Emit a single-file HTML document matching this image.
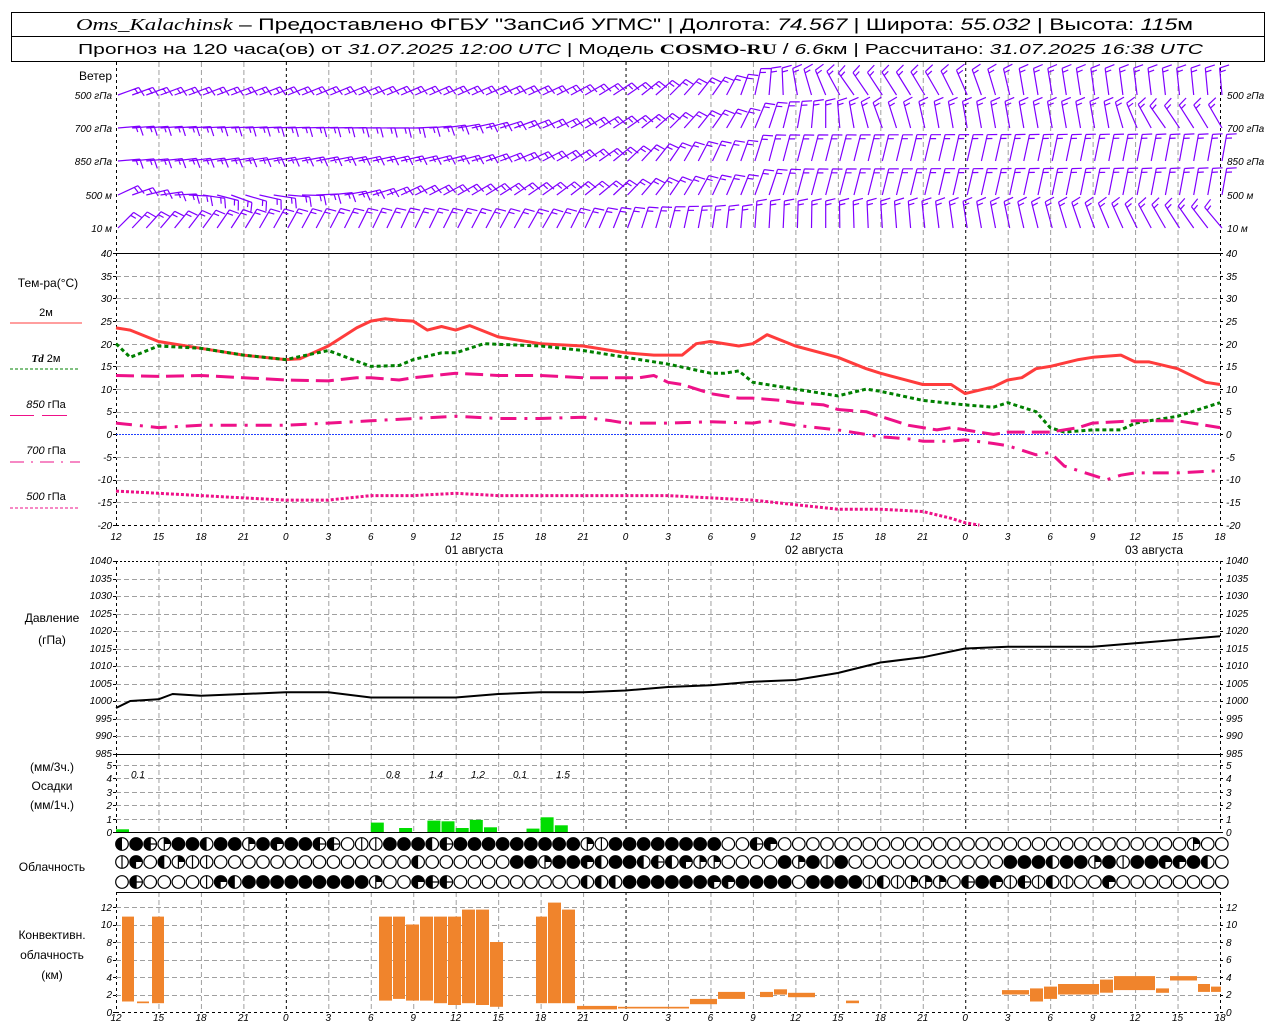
<!DOCTYPE html>
<html><head><meta charset="utf-8"><style>
html,body{margin:0;padding:0;background:#fff;}
svg{display:block;font-family:"Liberation Sans",sans-serif;}
.t{font-size:10px;font-style:italic;}
.l{font-size:12px;}
</style></head><body>
<svg id="s" width="1280" height="1024" viewBox="0 0 1280 1024" xmlns="http://www.w3.org/2000/svg">
<rect x="0" y="0" width="1280" height="1024" fill="#fff"/>
<g id="grid"></g>
<g id="data"></g>
<rect x="11.5" y="12.5" width="1253" height="49" fill="none" stroke="#000" stroke-width="1"/>
<line x1="11" y1="36.5" x2="1265" y2="36.5" stroke="#000"/>
<text x="76" y="30" font-size="17" textLength="1117" lengthAdjust="spacingAndGlyphs"><tspan font-family="Liberation Serif" font-style="italic">Oms_Kalachinsk</tspan> – Предоставлено ФГБУ "ЗапСиб УГМС" | Долгота: <tspan font-style="italic">74.567</tspan> | Широта: <tspan font-style="italic">55.032</tspan> | Высота: <tspan font-style="italic">115</tspan>м</text>
<text x="78" y="54" font-size="15" textLength="1125" lengthAdjust="spacingAndGlyphs">Прогноз на 120 часа(ов) от <tspan font-style="italic">31.07.2025 12:00 UTC</tspan>  | Модель <tspan font-family="Liberation Serif" font-weight="bold">COSMO-RU</tspan> / <tspan font-style="italic">6.6</tspan>км | Рассчитано: <tspan font-style="italic">31.07.2025 16:38 UTC</tspan></text>
<g class="l" text-anchor="end">
<text x="112" y="80">Ветер</text>
</g>
<g class="t" font-size="11" text-anchor="end">
<text x="112" y="99">500 гПа</text><text x="112" y="132">700 гПа</text><text x="112" y="165">850 гПа</text><text x="112" y="199">500  м</text><text x="112" y="232">10   м</text>
</g>
<g class="t" font-size="11">
<text x="1227" y="99">500 гПа</text><text x="1227" y="132">700 гПа</text><text x="1227" y="165">850 гПа</text><text x="1227" y="199">500  м</text><text x="1227" y="232">10   м</text>
</g>
<g class="t" text-anchor="end">
<text x="112" y="257">40</text><text x="112" y="280">35</text><text x="112" y="302">30</text><text x="112" y="325">25</text><text x="112" y="348">20</text><text x="112" y="370">15</text><text x="112" y="393">10</text><text x="112" y="415">5</text><text x="112" y="438">0</text><text x="112" y="461">-5</text><text x="112" y="483">-10</text><text x="112" y="506">-15</text><text x="112" y="529">-20</text>
</g>
<g class="t">
<text x="1226" y="257">40</text><text x="1226" y="280">35</text><text x="1226" y="302">30</text><text x="1226" y="325">25</text><text x="1226" y="348">20</text><text x="1226" y="370">15</text><text x="1226" y="393">10</text><text x="1226" y="415">5</text><text x="1226" y="438">0</text><text x="1226" y="461">-5</text><text x="1226" y="483">-10</text><text x="1226" y="506">-15</text><text x="1226" y="529">-20</text>
</g>
<g class="l" text-anchor="middle">
<text x="48" y="287">Тем-ра(°C)</text>
<text x="46" y="316" font-size="11">2м</text>
<text x="46" y="362" font-size="11"><tspan font-style="italic" font-family="Liberation Serif" font-weight="bold">Td</tspan>  2м</text>
<text x="46" y="408" font-size="11"><tspan font-style="italic">850</tspan> гПа</text>
<text x="46" y="454" font-size="11"><tspan font-style="italic">700</tspan> гПа</text>
<text x="46" y="500" font-size="11"><tspan font-style="italic">500</tspan> гПа</text>
</g>
<line x1="10" y1="323" x2="82" y2="323" stroke="#ff3c3c" stroke-width="1"/>
<line x1="10" y1="369" x2="80" y2="369" stroke="#008000" stroke-dasharray="3,2"/>
<line x1="10" y1="415.5" x2="34" y2="415.5" stroke="#ee1188"/><line x1="42" y1="415.5" x2="67" y2="415.5" stroke="#ee1188"/>
<line x1="10" y1="462" x2="80" y2="462" stroke="#ee1188" stroke-dasharray="14,7,2,7"/>
<line x1="10" y1="508" x2="80" y2="508" stroke="#ee1188" stroke-dasharray="3,2"/>
<g class="t" font-size="13" text-anchor="middle">
<text x="116" y="540">12</text><text x="158.5" y="540">15</text><text x="201" y="540">18</text><text x="243.4" y="540">21</text><text x="285.8" y="540">0</text><text x="328.3" y="540">3</text><text x="370.8" y="540">6</text><text x="413.2" y="540">9</text><text x="455.7" y="540">12</text><text x="498.1" y="540">15</text><text x="540.6" y="540">18</text><text x="583.1" y="540">21</text><text x="625.5" y="540">0</text><text x="668" y="540">3</text><text x="710.4" y="540">6</text><text x="752.9" y="540">9</text><text x="795.4" y="540">12</text><text x="837.8" y="540">15</text><text x="880.3" y="540">18</text><text x="922.7" y="540">21</text><text x="965.2" y="540">0</text><text x="1007.7" y="540">3</text><text x="1050.1" y="540">6</text><text x="1092.6" y="540">9</text><text x="1135" y="540">12</text><text x="1177.5" y="540">15</text><text x="1220" y="540">18</text>
</g>
<g class="l" text-anchor="middle">
<text x="474" y="554">01 августа</text><text x="814" y="554">02 августа</text><text x="1154" y="554">03 августа</text>
</g>
<g class="t" font-size="9" text-anchor="end">
<text x="112" y="564">1040</text><text x="112" y="582">1035</text><text x="112" y="599">1030</text><text x="112" y="617">1025</text><text x="112" y="634">1020</text><text x="112" y="652">1015</text><text x="112" y="669">1010</text><text x="112" y="687">1005</text><text x="112" y="704">1000</text><text x="112" y="722">995</text><text x="112" y="739">990</text><text x="112" y="757">985</text>
</g>
<g class="t" font-size="9">
<text x="1226" y="564">1040</text><text x="1226" y="582">1035</text><text x="1226" y="599">1030</text><text x="1226" y="617">1025</text><text x="1226" y="634">1020</text><text x="1226" y="652">1015</text><text x="1226" y="669">1010</text><text x="1226" y="687">1005</text><text x="1226" y="704">1000</text><text x="1226" y="722">995</text><text x="1226" y="739">990</text><text x="1226" y="757">985</text>
</g>
<g class="l" text-anchor="middle">
<text x="52" y="622">Давление</text><text x="52" y="644">(гПа)</text>
<text x="52" y="771">(мм/3ч.)</text><text x="52" y="790">Осадки</text><text x="52" y="809">(мм/1ч.)</text>
<text x="52" y="871">Облачность</text>
<text x="52" y="939">Конвективн.</text><text x="52" y="959">облачность</text><text x="52" y="979">(км)</text>
</g>
<g class="t" text-anchor="end">
<text x="112" y="769">5</text><text x="112" y="782">4</text><text x="112" y="796">3</text><text x="112" y="809">2</text><text x="112" y="823">1</text><text x="112" y="836">0</text>
<text x="112" y="911">12</text><text x="112" y="928">10</text><text x="112" y="946">8</text><text x="112" y="963">6</text><text x="112" y="981">4</text><text x="112" y="998">2</text><text x="112" y="1016">0</text>
</g>
<g class="t">
<text x="1226" y="769">5</text><text x="1226" y="782">4</text><text x="1226" y="796">3</text><text x="1226" y="809">2</text><text x="1226" y="823">1</text><text x="1226" y="836">0</text>
<text x="1226" y="911">12</text><text x="1226" y="928">10</text><text x="1226" y="946">8</text><text x="1226" y="963">6</text><text x="1226" y="981">4</text><text x="1226" y="998">2</text><text x="1226" y="1016">0</text>
</g>
<g class="t" font-size="13" text-anchor="middle">
<text x="138" y="778">0.1</text><text x="393" y="778">0.8</text><text x="436" y="778">1.4</text><text x="478" y="778">1.2</text><text x="520" y="778">0.1</text><text x="563" y="778">1.5</text>
</g>
<g class="t" font-size="13" text-anchor="middle">
<text x="116" y="1021">12</text><text x="158.5" y="1021">15</text><text x="201" y="1021">18</text><text x="243.4" y="1021">21</text><text x="285.8" y="1021">0</text><text x="328.3" y="1021">3</text><text x="370.8" y="1021">6</text><text x="413.2" y="1021">9</text><text x="455.7" y="1021">12</text><text x="498.1" y="1021">15</text><text x="540.6" y="1021">18</text><text x="583.1" y="1021">21</text><text x="625.5" y="1021">0</text><text x="668" y="1021">3</text><text x="710.4" y="1021">6</text><text x="752.9" y="1021">9</text><text x="795.4" y="1021">12</text><text x="837.8" y="1021">15</text><text x="880.3" y="1021">18</text><text x="922.7" y="1021">21</text><text x="965.2" y="1021">0</text><text x="1007.7" y="1021">3</text><text x="1050.1" y="1021">6</text><text x="1092.6" y="1021">9</text><text x="1135" y="1021">12</text><text x="1177.5" y="1021">15</text><text x="1220" y="1021">18</text>
</g>
</svg>
<script>
(function(){
var NS="http://www.w3.org/2000/svg";
var G=document.getElementById("grid"),D=document.getElementById("data");
function el(p,t,a){var e=document.createElementNS(NS,t);for(var k in a)e.setAttribute(k,a[k]);p.appendChild(e);return e;}
function X(h){return 116+h*1104/78;}
function T(v){return 434.4-v*4.533;}
function P(v){return 561+(1040-v)*3.5;}
function R(v){return 832-v*13.4;}
function C(v){return 1012-v*8.75;}
var segs=[[62,253],[253,525],[561,754],[754,832],[892,1012]];
for(var i=0;i<=26;i++){var x=X(3*i)+0.5;var major=(i==0||i==26||i==4||i==12||i==20);
 segs.forEach(function(s){el(G,"line",{x1:x,x2:x,y1:s[0],y2:s[1],stroke:major?"#000":"#a0a0a0","stroke-dasharray":major?"3,3":"5,3","stroke-width":1});});}
function hl(y,c,d){el(G,"line",{x1:116,x2:1220,y1:y+0.5,y2:y+0.5,stroke:c,"stroke-dasharray":d,"stroke-width":1});}
for(var v=35;v>=-15;v-=5)if(v!=0)hl(Math.round(T(v)),"#a0a0a0","5,3");
for(var v=1035;v>=990;v-=5)hl(Math.round(P(v)),"#a0a0a0","5,3");
hl(561,"#000","2,2");
for(var v=1;v<=5;v++)hl(Math.round(R(v)),"#a0a0a0","5,3");
for(var v=2;v<=12;v+=2)hl(Math.round(C(v)),"#a0a0a0","5,3");
hl(253,"#000","");hl(754,"#000","");hl(892,"#000","");hl(832,"#000","");
hl(525,"#000","3,3");hl(1012,"#000","3,3");
el(G,"line",{x1:116,x2:1220,y1:434.5,y2:434.5,stroke:"#2040ff","stroke-dasharray":"2,1"});
function ticks(vals,f){vals.forEach(function(v){var y=Math.round(f(v))+0.5;el(G,"line",{x1:113,x2:116,y1:y,y2:y,stroke:"#000"});el(G,"line",{x1:1220,x2:1223,y1:y,y2:y,stroke:"#000"});});}
var a=[];for(var v=40;v>=-20;v-=5)a.push(v);ticks(a,T);
a=[];for(var v=1040;v>=985;v-=5)a.push(v);ticks(a,P);
ticks([0,1,2,3,4,5],R);ticks([0,2,4,6,8,10,12],C);
function line(pts,f,st){var s="";pts.forEach(function(p,k){s+=(k?"L":"M")+X(p[0]).toFixed(1)+","+f(p[1]).toFixed(1);});var o={d:s,fill:"none","stroke-linejoin":"round"};for(var k in st)o[k]=st[k];el(D,"path",o);}
var t2=[[0,23.5],[1,23],[3,20.5],[6,19],[9,17.5],[12,16.5],[13,16.7],[15,19.5],[17,23.5],[18,25],[19,25.5],[20,25.2],[21,25],[22,23],[23,23.8],[24,23],[25,24],[27,21.5],[30,20],[33,19.5],[36,18],[38,17.5],[40,17.5],[41,20],[42,20.5],[44,19.5],[45,20],[46,22],[48,19.5],[51,17],[53,14.5],[54,13.5],[57,11],[59,11],[60,9],[62,10.5],[63,12],[64,12.5],[65,14.5],[66,15],[68,16.5],[69,17],[71,17.5],[72,16],[73,16],[75,14.5],[77,11.5],[78,11]];
var td=[[0,20],[1,17],[3,19.5],[6,19],[9,17.5],[12,16.5],[15,18.5],[18,15],[20,15.2],[21,16.5],[23,18],[24,18],[26,20],[30,19.5],[33,18.5],[36,17],[39,15.5],[42,13.5],[43,13.5],[44,14],[45,11.5],[48,10],[51,8.5],[53,10],[54,9.5],[57,7.5],[60,6.5],[62,6],[63,7],[65,5],[66,1.5],[67,0.5],[69,1],[71,1],[72,2.5],[75,4],[78,7]];
line(t2,T,{stroke:"#ff3c3c","stroke-width":3});
line(td,T,{stroke:"#008000","stroke-width":3,"stroke-dasharray":"4,3"});
var p850=[[0,13],[3,12.8],[6,13],[9,12.5],[12,12],[15,11.8],[17,12.5],[18,12.5],[20,12],[21,12.5],[24,13.5],[27,13],[30,13],[33,12.5],[36,12.5],[37,12.5],[38,13],[39,11.5],[40,11],[42,9],[43,8.5],[44,8],[45,8],[47,7.5],[48,7],[50,6.5],[51,5.5],[53,5],[54,4],[56,2],[57,1.5],[58,1],[59,1.5],[60,1],[62,0],[63,0.5],[65,0.5],[66,0.5],[68,1.5],[69,2.5],[72,3],[75,3],[78,1.5]];
line(p850,T,{stroke:"#ee1188","stroke-width":3,"stroke-dasharray":"18,7"});
var p700=[[0,2.5],[3,1.5],[6,2],[9,2],[12,2],[15,2.5],[18,3],[21,3.5],[24,4],[27,3.5],[30,3.5],[33,3.8],[35,3],[36,2.5],[39,2.5],[42,2.8],[45,2.5],[46,3],[48,2],[51,1],[54,-0.5],[56,-1],[57,-1.5],[59,-1.5],[60,-1.2],[62,-2],[63,-2.5],[65,-4.5],[66,-4],[67,-7],[69,-9],[70,-10],[71,-9],[72,-8.5],[75,-8.5],[78,-8]];
line(p700,T,{stroke:"#ee1188","stroke-width":3,"stroke-dasharray":"16,8,3,8"});
var p500=[[0,-12.5],[3,-13],[6,-13.5],[9,-14],[12,-14.5],[15,-14.5],[18,-13.5],[21,-13.5],[24,-13],[27,-13.5],[30,-13.5],[33,-13.5],[36,-13.5],[39,-13.5],[42,-14],[45,-14.5],[48,-15.5],[51,-16.5],[54,-16.5],[57,-17],[59,-18.5],[60,-19.5],[61,-20]];
line(p500,T,{stroke:"#ee1188","stroke-width":3,"stroke-dasharray":"3,2"});
var pr=[[0,998],[1,1000],[3,1000.5],[4,1002],[6,1001.5],[9,1002],[12,1002.5],[15,1002.5],[18,1001],[21,1001],[24,1001],[27,1002],[30,1002.5],[33,1002.5],[36,1003],[39,1004],[42,1004.5],[45,1005.5],[48,1006],[51,1008],[54,1011],[57,1012.5],[60,1015],[63,1015.5],[69,1015.5],[72,1016.5],[75,1017.5],[78,1018.5]];
line(pr,P,{stroke:"#000","stroke-width":2});
[[0,0.2],[18,0.7],[20,0.3],[22,0.85],[23,0.8],[24,0.3],[25,0.9],[26,0.35],[29,0.25],[30,1.1],[31,0.5]].forEach(function(b){var x=X(b[0]);el(D,"rect",{x:x.toFixed(1),y:R(b[1]).toFixed(1),width:13,height:(b[1]*13.4).toFixed(1),fill:"#00dd00"});});
[[122,135,10.9,1.2],[137,150,1.2,1.0],[152,165,10.9,1.0],[379,393,10.9,1.3],[393,406,10.9,1.5],[406,420,10,1.3],[420,434,10.9,1.3],[434,448,10.9,1.0],[448,462,10.9,0.8],[462,476,11.7,1.0],[476,490,11.7,0.8],[490,504,8,0.6],[536,548,10.9,1.0],[548,562,12.5,1.0],[562,576,11.7,1.0],[577,618,0.7,0.3],[618,690,0.6,0.4],[690,718,1.5,0.9],[718,746,2.3,1.5],[760,774,2.3,1.7],[774,788,2.6,2.0],[788,816,2.2,1.7],[846,860,1.3,1.0],[1002,1030,2.5,2.0],[1030,1044,2.7,1.2],[1044,1058,2.9,1.5],[1058,1100,3.2,2.0],[1100,1114,3.7,2.2],[1114,1156,4.1,2.5],[1156,1170,2.7,2.2],[1170,1198,4.1,3.6],[1198,1211,3.2,2.3],[1211,1222,2.9,2.3]].forEach(function(b){el(D,"rect",{x:b[0],y:C(b[2]).toFixed(1),width:b[1]-b[0]-1,height:((b[2]-b[3])*8.75).toFixed(1),fill:"#f0842c"});});
var rows=[
"3562553552545566011555365555555552155555555006400000000000000000000000000000200",
"1403211000000000000003000000552554355363422000052515000000000005553552515544530",
"0600001435555555552004660000000003335555554455550555513122206541613100400000000200"];
rows.forEach(function(r,ri){var y=[844,862,882][ri];
 for(var k=0;k<79;k++){var c=r.charAt(k)||"0";var cx=122+k*14.1,rr=6.3;
  var g=el(D,"g",{});
  el(g,"circle",{cx:cx,cy:y,r:rr,fill:c=="5"?"#000":"#fff",stroke:"#000","stroke-width":1.2});
  if(c=="3"||c=="6")el(g,"path",{d:"M"+cx+","+(y-rr)+"A"+rr+","+rr+" 0 0 0 "+cx+","+(y+rr)+"Z",fill:"#000"});
  if(c=="2")el(g,"path",{d:"M"+cx+","+y+"L"+cx+","+(y-rr)+"A"+rr+","+rr+" 0 0 1 "+(cx+rr)+","+y+"Z",fill:"#000"});
  if(c=="4")el(g,"path",{d:"M"+cx+","+y+"L"+cx+","+(y+rr)+"A"+rr+","+rr+" 0 1 1 "+(cx+rr)+","+y+"Z",fill:"#000"});
  if(c=="1"||c=="2"||c=="6")el(g,"line",{x1:cx,x2:cx,y1:y-rr,y2:y+rr,stroke:"#000","stroke-width":1.2});
  if(c=="6")el(g,"line",{x1:cx,x2:cx+rr,y1:y,y2:y,stroke:"#000","stroke-width":1.2});
 }});
var wy=[95,128,161,195,228];
var kp=[
 [[0,20],[30,25],[36,35],[42,55],[48,100],[52,125],[58,120],[64,100],[78,95]],
 [[0,5],[20,0],[28,20],[36,35],[42,55],[48,80],[54,110],[58,100],[70,100],[74,125],[78,120]],
 [[0,5],[24,15],[34,35],[40,60],[46,75],[78,80]],
 [[0,25],[8,-20],[20,25],[34,40],[42,65],[48,75],[78,80]],
 [[0,45],[10,60],[20,65],[30,60],[36,70],[44,85],[56,95],[66,105],[74,120],[78,130]]];
function interp(k,h){for(var i=0;i<k.length-1;i++){if(h<=k[i+1][0]){var f=(h-k[i][0])/(k[i+1][0]-k[i][0]);return k[i][1]+f*(k[i+1][1]-k[i][1]);}}return k[k.length-1][1];}
var d="";
for(var r=0;r<5;r++){for(var h=0;h<=78;h++){
 var th=interp(kp[r],h)*Math.PI/180;var L=h>44?27:22;var x0=X(h)+2,y0=wy[r];
 var ex=x0+L*Math.cos(th),ey=y0-L*Math.sin(th);
 d+="M"+x0.toFixed(1)+","+y0+"L"+ex.toFixed(1)+","+ey.toFixed(1);
 var nf=h>44?2:2;var fa=th-Math.PI/2*0.85;
 for(var f=0;f<nf;f++){var bx=x0+(L-f*4)*Math.cos(th),by=y0-(L-f*4)*Math.sin(th);var fl=(f==nf-1)?6:10;
  d+="M"+bx.toFixed(1)+","+by.toFixed(1)+"L"+(bx+fl*Math.cos(fa)).toFixed(1)+","+(by-fl*Math.sin(fa)).toFixed(1);}
}}
el(D,"path",{d:d,fill:"none",stroke:"#8000ff","stroke-width":1.2});
})();
</script>
</body></html>
